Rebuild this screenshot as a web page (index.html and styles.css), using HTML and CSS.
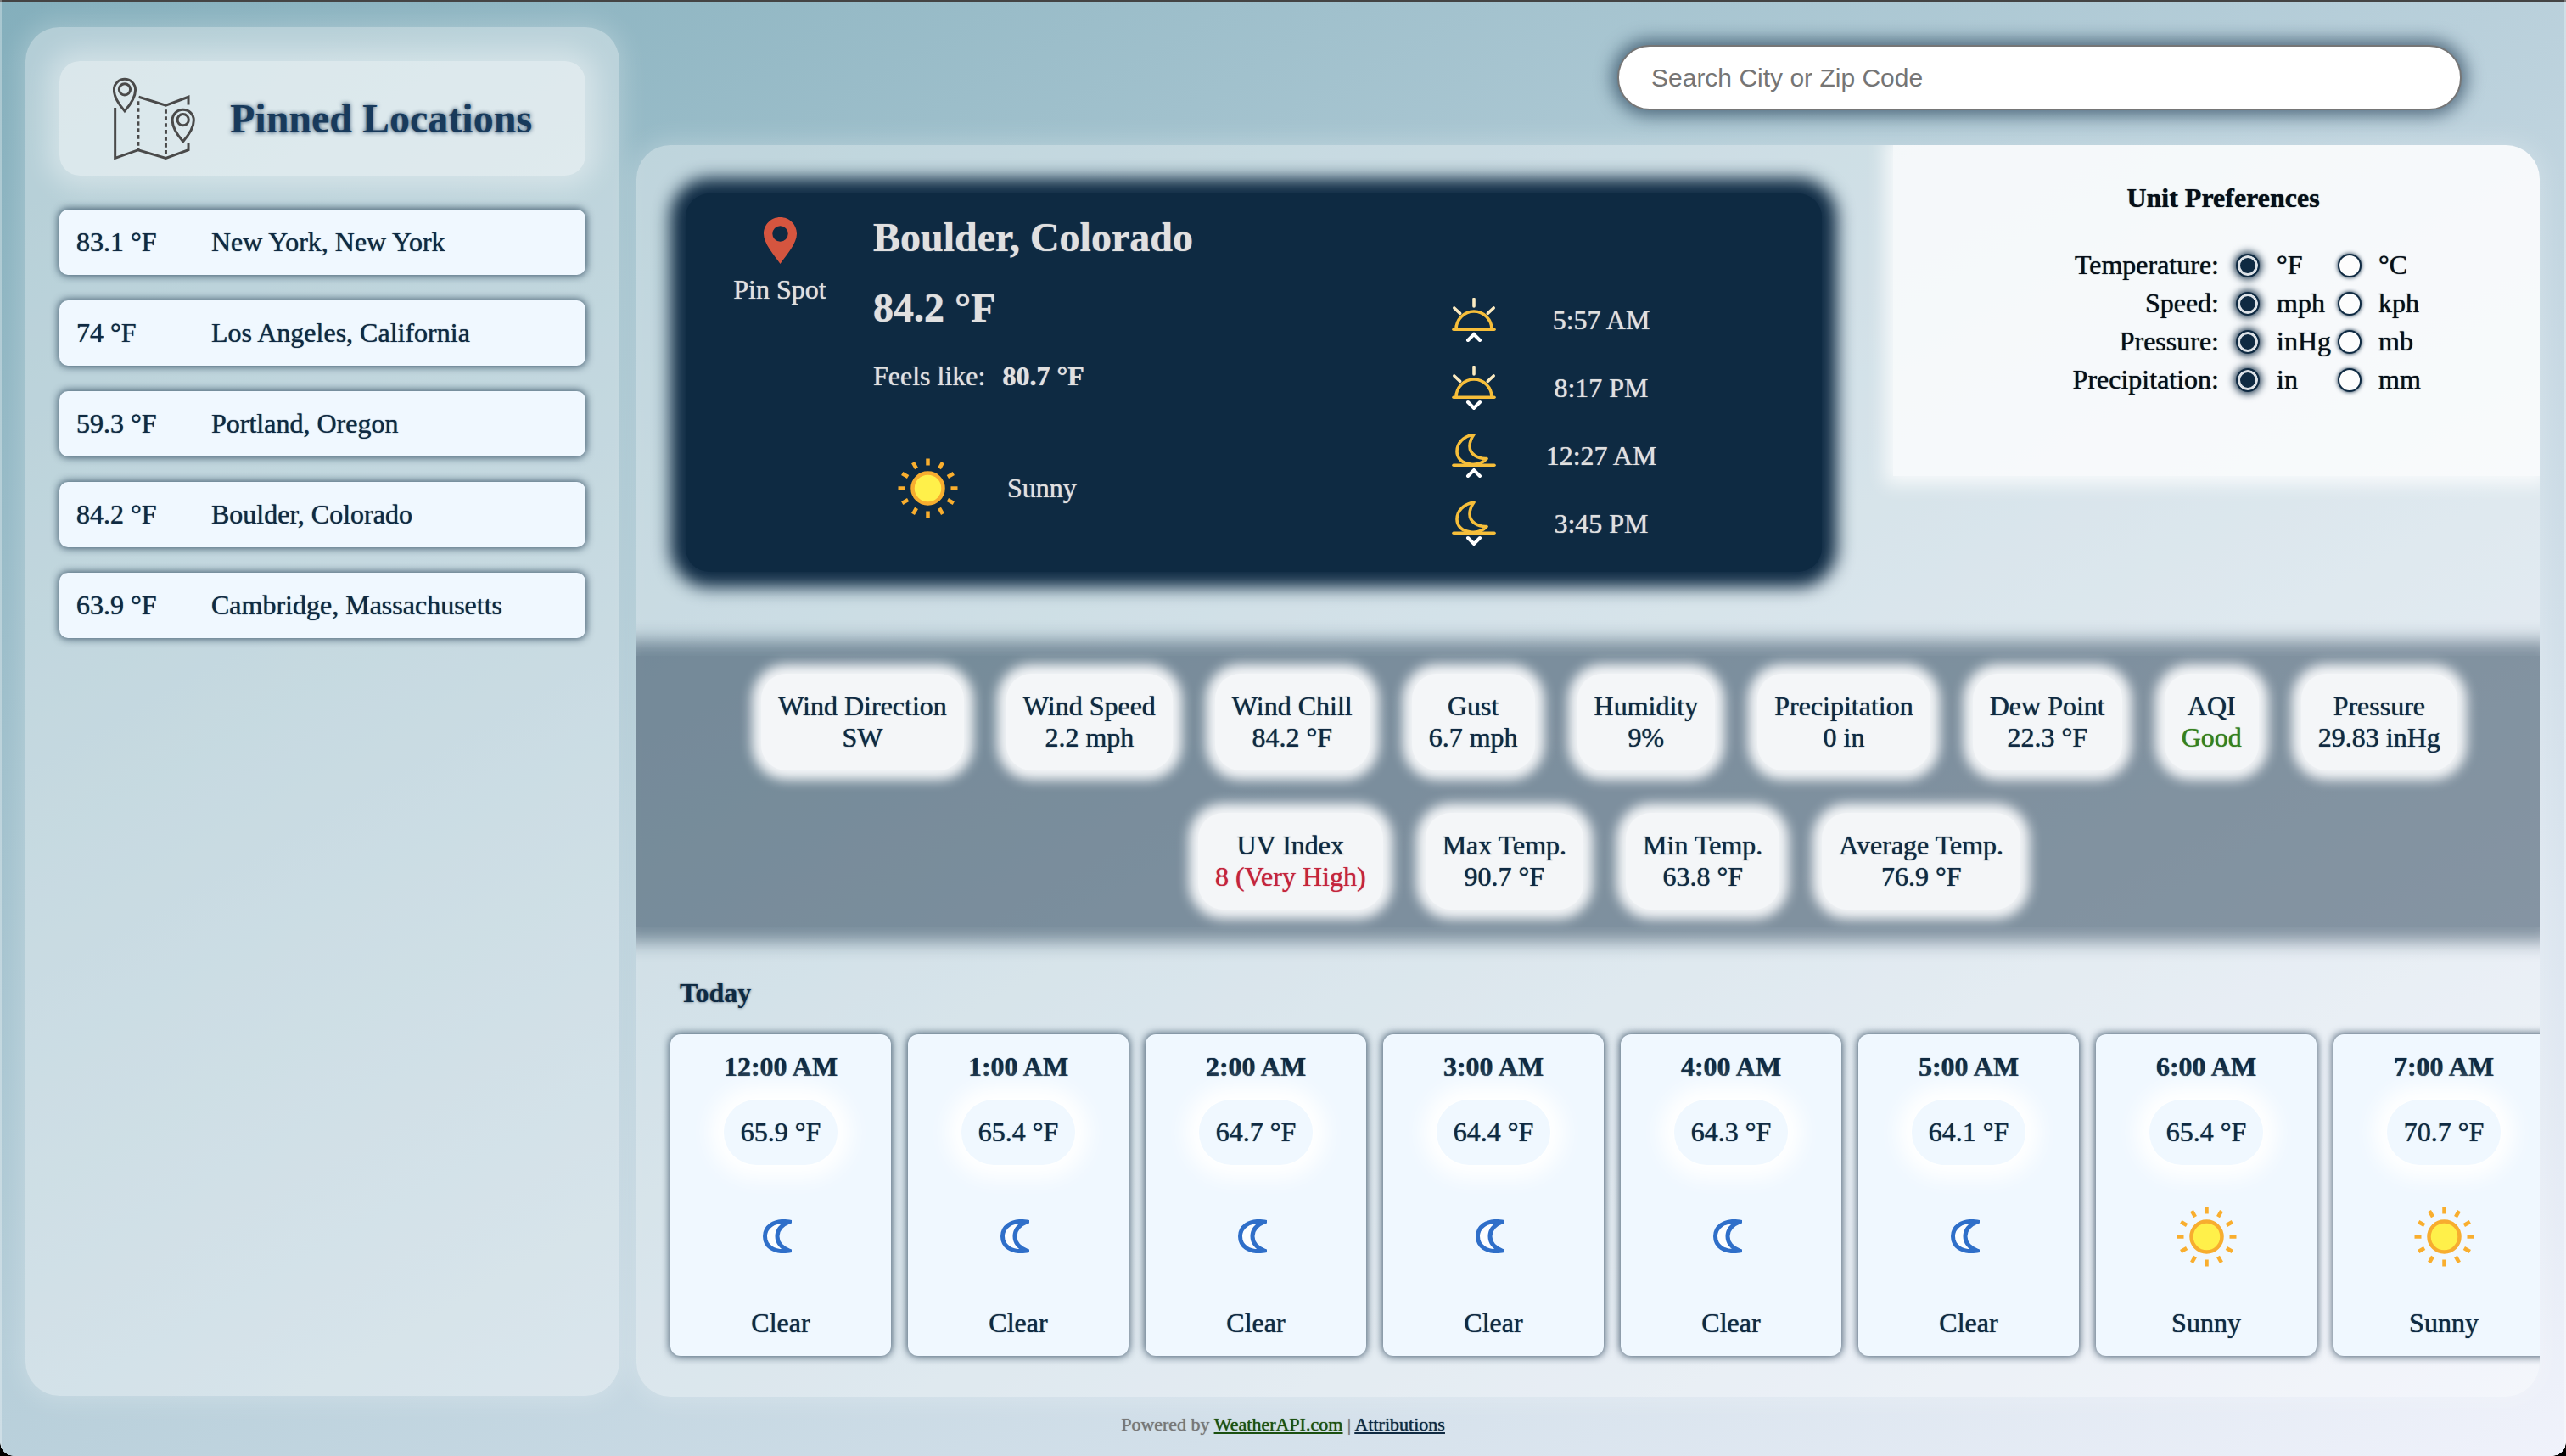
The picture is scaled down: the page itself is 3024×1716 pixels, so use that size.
FILE: index.html
```html
<!DOCTYPE html>
<html lang="en">
<head>
<meta charset="utf-8">
<title>Weather</title>
<link rel="stylesheet" href="styles.css">
</head>
<body>
<svg class="defs" aria-hidden="true">
  <symbol id="sun" viewBox="0 0 71 71">
    <g class="sun-rays">
      <line x1="35.5" y1="0.5" x2="35.5" y2="8.5"/>
      <line x1="35.5" y1="62.5" x2="35.5" y2="70.5"/>
      <line x1="0.5" y1="35.5" x2="8.5" y2="35.5"/>
      <line x1="62.5" y1="35.5" x2="70.5" y2="35.5"/>
      <line x1="18" y1="5.2" x2="22" y2="12.1"/>
      <line x1="53" y1="5.2" x2="49" y2="12.1"/>
      <line x1="18" y1="65.8" x2="22" y2="58.9"/>
      <line x1="53" y1="65.8" x2="49" y2="58.9"/>
      <line x1="5.2" y1="18" x2="12.1" y2="22"/>
      <line x1="65.8" y1="18" x2="58.9" y2="22"/>
      <line x1="5.2" y1="53" x2="12.1" y2="49"/>
      <line x1="65.8" y1="53" x2="58.9" y2="49"/>
    </g>
    <ellipse class="sun-disc" cx="35.5" cy="35.5" rx="18" ry="18"/>
  </symbol>
  <symbol id="moon" viewBox="0 0 34 40">
    <path class="moon-shape" d="M31 3C12 0 2.5 10 2.5 20C2.5 31 12 40 31 37C21 33 17 27 17 20C17 13 21 7 31 3Z"/>
  </symbol>
  <symbol id="dome" viewBox="0 0 52 52">
    <line class="astro-bar" x1="2" y1="37.3" x2="50" y2="37.3"/>
    <path class="astro-line" d="M5 37A21 21 0 0 1 47 37"/>
    <g class="astro-ray">
      <line x1="26" y1="1.5" x2="26" y2="10"/>
      <line x1="2.8" y1="12" x2="9.7" y2="18.3"/>
      <line x1="49.2" y1="12" x2="42.3" y2="18.3"/>
    </g>
  </symbol>
  <symbol id="crescent" viewBox="0 0 52 52">
    <line class="astro-bar" x1="2" y1="37.3" x2="50" y2="37.3"/>
    <path class="astro-line" d="M26 1C14 3 6 11 6 21C6 29 12 35 22 36C30 37 37 34 41 29.5C30 30 21 24 21 15C21 9 23 5 26 1Z"/>
  </symbol>
  <symbol id="chev-up" viewBox="0 0 52 52"><path class="chev" d="M19 50L26 43L33 50"/></symbol>
  <symbol id="chev-down" viewBox="0 0 52 52"><path class="chev" d="M19 43L26 50L33 43"/></symbol>
</svg>

<div class="window-top"></div>
<div class="layout">
  <aside class="sidebar">
    <header class="side-title">
      <svg class="map-icon" viewBox="100 120 292 292">
        <g class="map-lines">
          <path d="M108 228V407L190 378L288 407L368 378V352"/>
          <path d="M192 190L288 220L368 190V218"/>
          <path class="map-dash" d="M190 205V378"/>
          <path class="map-dash" d="M288 235V395"/>
          <path d="M142 240C120 215 104 190 104 165A38 38 0 0 1 180 165C180 190 164 215 142 240Z"/>
          <circle cx="142" cy="163" r="20"/>
          <path d="M349 348C327 323 311 298 311 273A38 38 0 0 1 387 273C387 298 371 323 349 348Z"/>
          <circle cx="349" cy="271" r="20"/>
        </g>
      </svg>
      <h1 class="side-heading">Pinned Locations</h1>
    </header>
    <ul class="pins">
      <li class="pin-row"><span class="pin-temp">83.1 °F</span><span>New York, New York</span></li>
      <li class="pin-row"><span class="pin-temp">74 °F</span><span>Los Angeles, California</span></li>
      <li class="pin-row"><span class="pin-temp">59.3 °F</span><span>Portland, Oregon</span></li>
      <li class="pin-row"><span class="pin-temp">84.2 °F</span><span>Boulder, Colorado</span></li>
      <li class="pin-row"><span class="pin-temp">63.9 °F</span><span>Cambridge, Massachusetts</span></li>
    </ul>
  </aside>

  <div class="content">
    <div class="search-bar">
      <input class="search" type="text" placeholder="Search City or Zip Code">
    </div>
    <main class="panel">
      <section class="top-row">
        <div class="hero">
          <div class="pin-spot">
            <svg class="pin-icon" viewBox="0 0 39 55"><path fill-rule="evenodd" d="M19.5 0C8.7 0 0 8.7 0 19.5C0 31 12 44 19.5 55C27 44 39 31 39 19.5C39 8.7 30.3 0 19.5 0ZM19.5 10.3A9.2 9.2 0 1 1 19.5 28.7A9.2 9.2 0 1 1 19.5 10.3Z"/></svg>
            <span>Pin Spot</span>
          </div>
          <div class="current">
            <h2 class="city">Boulder, Colorado</h2>
            <div class="now-temp">84.2 °F</div>
            <div class="feels"><span>Feels like:</span><b>80.7 °F</b></div>
            <div class="condition">
              <svg class="sun-large"><use href="#sun"/></svg>
              <span>Sunny</span>
            </div>
          </div>
          <div class="astro">
            <div class="astro-row"><svg class="astro-icon"><use href="#dome"/><use href="#chev-up"/></svg><span class="astro-time">5:57 AM</span></div>
            <div class="astro-row"><svg class="astro-icon"><use href="#dome"/><use href="#chev-down"/></svg><span class="astro-time">8:17 PM</span></div>
            <div class="astro-row"><svg class="astro-icon"><use href="#crescent"/><use href="#chev-up"/></svg><span class="astro-time">12:27 AM</span></div>
            <div class="astro-row"><svg class="astro-icon"><use href="#crescent"/><use href="#chev-down"/></svg><span class="astro-time">3:45 PM</span></div>
          </div>
        </div>
        <form class="units">
          <h3 class="units-title">Unit Preferences</h3>
          <div class="units-grid">
            <span class="unit-label">Temperature:</span>
            <input class="radio" type="radio" name="t" checked><span class="unit-val">°F</span>
            <input class="radio" type="radio" name="t"><span class="unit-val">°C</span>
            <span class="unit-label">Speed:</span>
            <input class="radio" type="radio" name="s" checked><span class="unit-val">mph</span>
            <input class="radio" type="radio" name="s"><span class="unit-val">kph</span>
            <span class="unit-label">Pressure:</span>
            <input class="radio" type="radio" name="p" checked><span class="unit-val">inHg</span>
            <input class="radio" type="radio" name="p"><span class="unit-val">mb</span>
            <span class="unit-label">Precipitation:</span>
            <input class="radio" type="radio" name="r" checked><span class="unit-val">in</span>
            <input class="radio" type="radio" name="r"><span class="unit-val">mm</span>
          </div>
        </form>
      </section>

      <section class="stats">
        <div class="chip">Wind Direction<br>SW</div>
        <div class="chip">Wind Speed<br>2.2 mph</div>
        <div class="chip">Wind Chill<br>84.2 °F</div>
        <div class="chip">Gust<br>6.7 mph</div>
        <div class="chip">Humidity<br>9%</div>
        <div class="chip">Precipitation<br>0 in</div>
        <div class="chip">Dew Point<br>22.3 °F</div>
        <div class="chip">AQI<br><span class="good">Good</span></div>
        <div class="chip">Pressure<br>29.83 inHg</div>
        <div class="chip">UV Index<br><span class="bad">8 (Very High)</span></div>
        <div class="chip">Max Temp.<br>90.7 °F</div>
        <div class="chip">Min Temp.<br>63.8 °F</div>
        <div class="chip">Average Temp.<br>76.9 °F</div>
      </section>

      <section class="today">
        <h3 class="today-title">Today</h3>
        <div class="hours">
          <article class="hour"><div class="hour-time">12:00 AM</div><div class="hour-temp">65.9 °F</div><div class="hour-icon"><svg class="moon-icon"><use href="#moon"/></svg></div><div>Clear</div></article>
          <article class="hour"><div class="hour-time">1:00 AM</div><div class="hour-temp">65.4 °F</div><div class="hour-icon"><svg class="moon-icon"><use href="#moon"/></svg></div><div>Clear</div></article>
          <article class="hour"><div class="hour-time">2:00 AM</div><div class="hour-temp">64.7 °F</div><div class="hour-icon"><svg class="moon-icon"><use href="#moon"/></svg></div><div>Clear</div></article>
          <article class="hour"><div class="hour-time">3:00 AM</div><div class="hour-temp">64.4 °F</div><div class="hour-icon"><svg class="moon-icon"><use href="#moon"/></svg></div><div>Clear</div></article>
          <article class="hour"><div class="hour-time">4:00 AM</div><div class="hour-temp">64.3 °F</div><div class="hour-icon"><svg class="moon-icon"><use href="#moon"/></svg></div><div>Clear</div></article>
          <article class="hour"><div class="hour-time">5:00 AM</div><div class="hour-temp">64.1 °F</div><div class="hour-icon"><svg class="moon-icon"><use href="#moon"/></svg></div><div>Clear</div></article>
          <article class="hour"><div class="hour-time">6:00 AM</div><div class="hour-temp">65.4 °F</div><div class="hour-icon"><svg class="sun-small"><use href="#sun"/></svg></div><div>Sunny</div></article>
          <article class="hour"><div class="hour-time">7:00 AM</div><div class="hour-temp">70.7 °F</div><div class="hour-icon"><svg class="sun-small"><use href="#sun"/></svg></div><div>Sunny</div></article>
        </div>
      </section>
    </main>
  </div>
</div>
<footer class="footer">Powered by <a class="link-api" href="#">WeatherAPI.com</a> | <a class="link-attr" href="#">Attributions</a></footer>
<div class="frame"></div>
<div class="corner corner-left"></div>
<div class="corner corner-right"></div>
</body>
</html>
```
FILE: styles.css
```css
* { box-sizing: border-box; }
html, body { margin: 0; height: 1716px; overflow: hidden; }
body {
  position: relative;
  font: 32px "Liberation Serif", "Times New Roman", serif;
  color: #0f2a42;
  text-shadow: 0 0 1px currentColor;
  background: linear-gradient(to bottom right, #84afbc, #f0f2fb);
}
.defs { display: none; }
.window-top { height: 2px; background: #444; }

.layout {
  display: grid;
  grid-template-columns: 700px 2243px;
  column-gap: 20px;
  padding: 30px 0 0 30px;
}

/* sidebar */
.sidebar {
  height: 1613px;
  padding: 40px;
  border-radius: 40px;
  background: rgba(255, 255, 255, .38);
  box-shadow: 0 0 30px 4px rgba(255, 255, 255, .25);
}
.side-title {
  display: flex;
  align-items: center;
  gap: 41px;
  height: 135px;
  padding-left: 63px;
  border-radius: 24px;
  background: rgba(255, 255, 255, .5);
  box-shadow: 0 0 30px 14px rgba(255, 255, 255, .38);
}
.map-icon { width: 97px; height: 97px; flex: none; }
.map-lines { fill: none; stroke: #4a4a4a; stroke-width: 9; }
.map-dash { stroke-dasharray: 14 10; }
.side-heading {
  margin: 0;
  font-size: 48px;
  font-weight: bold;
  color: #183a5b;
  text-shadow: 0 0 5px rgba(24, 58, 91, .9);
}
.pins {
  list-style: none;
  margin: 40px 0 0;
  padding: 0;
  display: flex;
  flex-direction: column;
  gap: 30px;
}
.pin-row {
  display: flex;
  align-items: center;
  height: 77px;
  padding-left: 20px;
  border-radius: 10px;
  background: aliceblue;
  box-shadow: 0 0 10px 1px rgba(15, 42, 66, .75);
}
.pin-temp { width: 159px; flex: none; }

/* search */
.search-bar {
  display: flex;
  justify-content: flex-end;
  height: 139px;
  padding: 21px 92px 0 0;
}
.search {
  width: 995px;
  height: 77px;
  padding: 0 38px;
  border: 2px solid #767676;
  border-radius: 38px;
  background: #fff;
  font: 30px "Liberation Sans", Arial, sans-serif;
  box-shadow: 0 0 20px 6px rgba(15, 42, 66, .6);
}
.search::placeholder { color: #757575; opacity: 1; }

/* panel */
.panel {
  height: 1475px;
  border-radius: 40px;
  overflow: hidden;
  background: rgba(255, 255, 255, .38);
  box-shadow: 0 0 30px 4px rgba(255, 255, 255, .25);
}
.top-row { display: flex; height: 602px; align-items: flex-start; }
.hero {
  display: flex;
  width: 1339px;
  height: 446px;
  margin: 57px 0 0 58px;
  flex: none;
  border-radius: 28px;
  background: #0e2a42;
  color: #e0e0e0;
  box-shadow: 0 0 20px 18px #0f2b44;
}
.pin-spot {
  width: 221px;
  flex: none;
  padding: 28px 0 0 1px;
  display: flex;
  flex-direction: column;
  align-items: center;
  gap: 12px;
}
.pin-icon { width: 39px; height: 55px; fill: #d5553f; }
.current { width: 682px; flex: none; padding-top: 24px; }
.city { margin: 0; font-size: 48px; font-weight: bold; }
.now-temp { margin-top: 28px; font-size: 48px; font-weight: bold; }
.feels { margin-top: 35px; display: flex; gap: 20px; }
.condition { display: flex; align-items: center; gap: 58px; margin: 78px 0 0 29px; }
.sun-large { width: 71px; height: 71px; }
.sun-rays line { stroke: #f9ae2e; stroke-width: 4.5; }
.sun-disc { fill: #fff04a; stroke: #f7ad2f; stroke-width: 4.5; }
.astro { padding-top: 109px; }
.astro-row { display: flex; align-items: center; height: 80px; }
.astro-icon { width: 52px; height: 52px; flex: none; }
.astro-time { width: 248px; text-align: center; }
.astro-bar { stroke: #f6be3a; stroke-width: 3.6; stroke-linecap: round; }
.astro-line { fill: none; stroke: #f6be3a; stroke-width: 3.6; stroke-linejoin: round; }
.astro-ray line { stroke: #fbeac0; stroke-width: 3.6; stroke-linecap: round; }
.chev { fill: none; stroke: #fff; stroke-width: 4; stroke-linecap: round; }

.units {
  width: 762px;
  height: 390px;
  margin-left: auto;
  padding-top: 44px;
  background: rgba(255, 255, 255, .78);
  box-shadow: 0 0 20px 10px rgba(255, 255, 255, .78);
  color: #060f18;
}
.units-title { margin: 0 0 38px; padding-left: 16px; text-align: center; font-size: 32px; font-weight: bold; }
.units-grid {
  display: grid;
  grid-template-columns: 221px 28px 92px 28px auto;
  grid-auto-rows: 45px;
  align-items: center;
  padding-left: 183px;
}
.unit-label { padding-right: 20px; text-align: right; }
.unit-val { padding-left: 20px; white-space: nowrap; }
.radio {
  appearance: none;
  width: 28px;
  height: 28px;
  margin: 0;
  border: 2px solid #0f2a42;
  border-radius: 50%;
  background: #fdfdfd;
  box-shadow: 0 0 5px #0f2a42;
}
.radio:checked {
  background: #0f2a42;
  box-shadow: inset 0 0 0 3px #dde2e7, 0 0 10px 2px #0f2a42;
}

/* stats */
.stats {
  display: flex;
  flex-wrap: wrap;
  justify-content: center;
  align-content: flex-start;
  gap: 50px;
  height: 319px;
  padding: 21px 0 0 50px;
  text-align: center;
  background: rgba(15, 42, 66, .46);
  box-shadow: 0 0 20px 18px rgba(15, 42, 66, .46);
}
.chip {
  height: 114px;
  padding: 20px;
  border-radius: 30px;
  white-space: nowrap;
  background: #f4f6f8;
  box-shadow: 0 0 14px 11px #f4f6f8;
}
.good { color: #35801f; }
.bad { color: #c4243c; }

/* today */
.today { padding-top: 60px; }
.today-title {
  margin: 0 0 30px 51px;
  font-size: 32px;
  font-weight: bold;
  text-shadow: 0 0 3px rgba(15, 42, 66, .7);
}
.hours { display: flex; gap: 20px; padding-left: 40px; }
.hour {
  flex: none;
  width: 260px;
  height: 379px;
  padding-top: 20px;
  border-radius: 12px;
  text-align: center;
  background: aliceblue;
  box-shadow: 0 0 10px 1px rgba(15, 42, 66, .75);
  display: flex;
  flex-direction: column;
  align-items: center;
}
.hour-time { font-weight: bold; }
.hour-temp {
  margin-top: 20px;
  padding: 20px;
  border-radius: 38px;
  background: aliceblue;
  box-shadow: 0 0 24px 16px #fff;
}
.hour-icon { display: flex; align-items: center; justify-content: center; height: 80px; margin: 44px 0 44px; }
.moon-icon { width: 34px; height: 40px; margin-left: -8px; }
.moon-shape { fill: #fcfeff; stroke: #2f6fc9; stroke-width: 5; }
.sun-small { width: 71px; height: 71px; }

.footer {
  padding-top: 20px;
  text-align: center;
  font-size: 22px;
  color: #777;
}
.link-api { color: #1b5010; }
.link-attr { color: #0f2a42; }

.frame {
  position: absolute;
  inset: 0;
  border-left: 2px solid rgba(255, 255, 255, .3);
  border-right: 2px solid rgba(255, 255, 255, .3);
  pointer-events: none;
}
.corner {
  position: absolute;
  bottom: 0;
  width: 16px;
  height: 16px;
}
.corner-left { left: 0; background: radial-gradient(circle at 100% 0, transparent 15.5px, #000 16px); }
.corner-right { right: 0; background: radial-gradient(circle at 0 0, transparent 15.5px, #000 16px); }
```
